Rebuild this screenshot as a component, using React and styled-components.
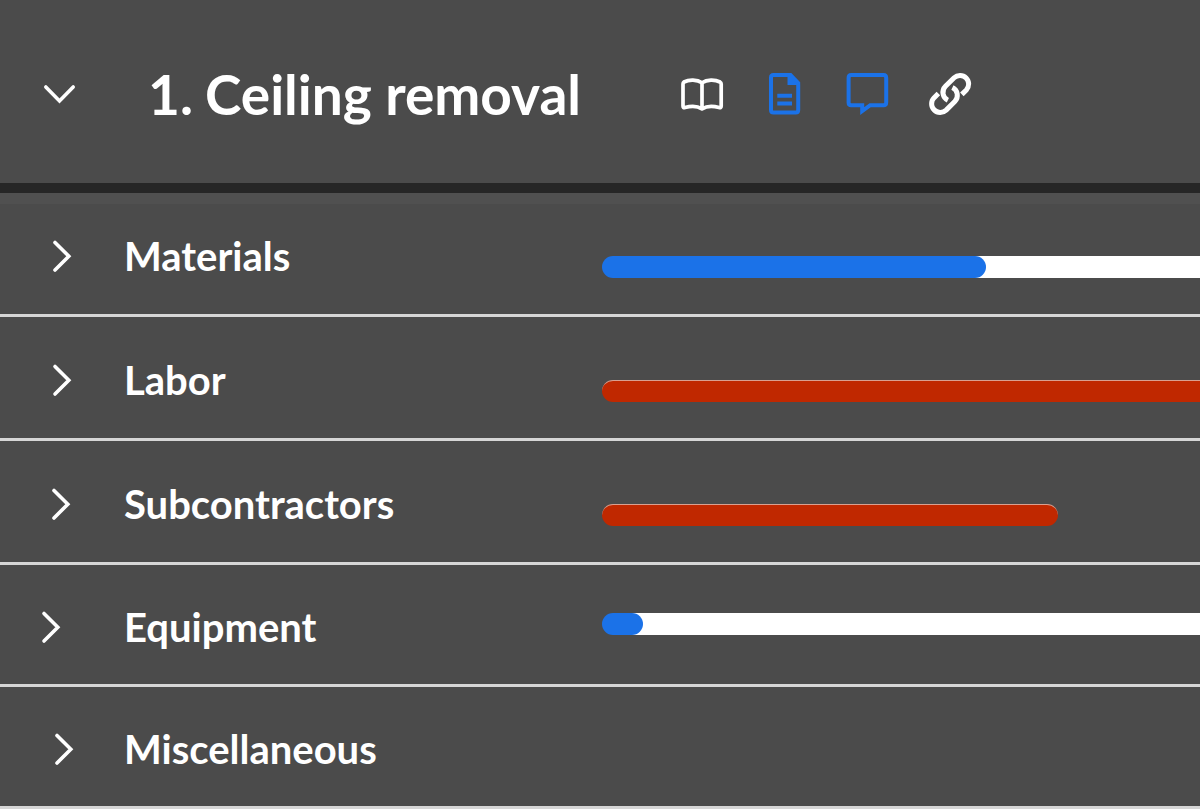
import React, { Component } from "react";
import styled, { createGlobalStyle } from "styled-components";

const GlobalStyle = createGlobalStyle`
  * {
    box-sizing: border-box;
  }

  body {
    margin: 0;
    background: #4b4b4b;
    color: #fff;
    font-family: Lato, "Open Sans", sans-serif;
    overflow-x: hidden;
  }
`;

const Header = styled.header`
  display: flex;
  align-items: center;
  padding: 62px 0 57px;
  border-bottom: 10px solid #262626;
`;

const IconButton = styled.button`
  display: flex;
  flex: none;
  padding: 0;
  border: 0;
  background: none;
  color: ${props => (props.$active ? "#1b72e8" : "#fff")};
  cursor: pointer;
`;

const HeaderToggle = styled.div`
  flex: none;
  width: 148px;
  padding-left: 42px;
`;

const Title = styled.h1`
  display: flex;
  flex: none;
  gap: 12px;
  width: 532px;
  margin: 0;
  font-size: 55px;
  font-weight: 700;
  line-height: 64px;
  white-space: nowrap;
`;

const Actions = styled.div`
  display: flex;
  gap: 39px;
`;

const CostList = styled.ul`
  margin: 0;
  padding: 0;
  list-style: none;
  background: linear-gradient(#505050 11px, #4b4b4b 11px);
`;

const CostRow = styled.li`
  display: grid;
  grid-template-columns: 124px 478px 1fr;
  align-items: center;
  height: ${props => (props.$dense ? 122 : 124)}px;
  padding-top: 4px;
  border-bottom: 3px solid #d6d6d6;
`;

const RowToggle = styled.div`
  padding-left: ${props => props.$indent}px;
`;

const Label = styled.h2`
  margin: 0;
  font-size: 40px;
  font-weight: 700;
  line-height: 48px;
`;

const Track = styled.div`
  height: 22px;
  margin-top: ${props => (props.$raised ? 0 : 22)}px;
  margin-bottom: ${props => (props.$raised ? 5 : 0)}px;
  border-radius: 11px 0 0 11px;
  background: ${props => (props.$over ? "none" : "linear-gradient(90deg, transparent 11px, #fff 11px)")};
`;

const Fill = styled.div`
  height: 100%;
  border-radius: ${props => (props.$full ? "11px 0 0 11px" : "11px")};
  border-top: ${props => (props.$over ? "1px solid #d9a090" : "0")};
  background: ${props => (props.$over ? "#c02800" : "#1b72e8")};
`;

const ChevronDown = () => (
  <svg width="36" height="36" viewBox="0 0 36 36" fill="none" stroke="currentColor" strokeWidth="3.6" strokeLinecap="round">
    <path d="M3.8 11 17.5 25 31.2 11" />
  </svg>
);

const ChevronRight = () => (
  <svg width="22" height="36" viewBox="0 0 22 36" fill="none" stroke="currentColor" strokeWidth="3.6" strokeLinecap="round">
    <path d="M4 4.4 17.8 18.2 4 32" />
  </svg>
);

const BookIcon = () => (
  <svg width="44" height="44" viewBox="0 0 44 44" fill="none" stroke="currentColor" strokeWidth="3.7" strokeLinejoin="round">
    <path d="M4 10C9 7.4 17 7.4 22 10.8 27 7.4 35 7.4 40 10Q41.2 10.8 41.2 12V34Q41.2 36.3 39 35.6C33 33.8 27 33.8 22 36.8 17 33.8 11 33.8 5 35.6Q3 36.3 3 34V12Q3 10.8 4 10ZM22 11V36" />
  </svg>
);

const DocumentIcon = () => (
  <svg width="44" height="44" viewBox="0 0 44 44" fill="none" stroke="currentColor" strokeWidth="4">
    <path d="M10.5 3H27.5L35.2 11V38Q35.2 40.5 32.7 40.5H10.5Q8 40.5 8 38V5.5Q8 3 10.5 3Z" />
    <path d="M24.5 2V13H36V10L28 2Z" fill="currentColor" stroke="none" />
    <path d="M14.3 23.8H29M14.3 31.5H29" />
  </svg>
);

const CommentIcon = () => (
  <svg width="44" height="44" viewBox="0 0 44 44" fill="none" stroke="currentColor" strokeWidth="4">
    <path d="M5.2 3H37.5Q40.2 3 40.2 5.7V30.5Q40.2 33.2 37.5 33.2H24.2L16.2 39V33.2H5.2Q2.6 33.2 2.6 30.5V5.7Q2.6 3 5.2 3Z" />
  </svg>
);

const LinkIcon = () => (
  <svg width="44" height="44" viewBox="1 0.6 22.9 22.9" fill="none" stroke="currentColor" strokeWidth="2.6">
    <path d="M13.19 8.69a4.5 4.5 0 0 1 1.24 7.24l-4.5 4.5a4.5 4.5 0 0 1-6.36-6.36l2.3-2.3M18.1 12.25l2.33-2.32a4.5 4.5 0 0 0-6.36-6.36l-4.5 4.5a4.5 4.5 0 0 0 1.24 7.24" />
  </svg>
);

const costs = [
  { name: "Materials", percent: 64.2, indent: 51 },
  { name: "Labor", percent: 100, indent: 51, over: true, full: true },
  { name: "Subcontractors", percent: 76.2, indent: 50, over: true },
  { name: "Equipment", percent: 6.9, indent: 40, dense: true, raised: true },
  { name: "Miscellaneous", indent: 53, dense: true }
];

class App extends Component {
  renderBar(cost) {
    if (cost.percent === undefined) {
      return null;
    }

    return (
      <Track
        role="progressbar"
        aria-label={cost.name}
        aria-valuenow={cost.percent}
        $over={cost.over}
        $raised={cost.raised}
      >
        <Fill
          $over={cost.over}
          $full={cost.full}
          style={{ width: `${cost.percent}%` }}
        />
      </Track>
    );
  }

  render() {
    return (
      <React.Fragment>
        <GlobalStyle />
        <Header>
          <HeaderToggle>
            <IconButton aria-label="Collapse">
              <ChevronDown />
            </IconButton>
          </HeaderToggle>
          <Title>
            <span>1.</span>
            <span>Ceiling removal</span>
          </Title>
          <Actions>
            <IconButton aria-label="Catalog">
              <BookIcon />
            </IconButton>
            <IconButton aria-label="Notes" $active>
              <DocumentIcon />
            </IconButton>
            <IconButton aria-label="Comments" $active>
              <CommentIcon />
            </IconButton>
            <IconButton aria-label="Link">
              <LinkIcon />
            </IconButton>
          </Actions>
        </Header>
        <CostList>
          {costs.map(cost => (
            <CostRow key={cost.name} $dense={cost.dense}>
              <RowToggle $indent={cost.indent}>
                <IconButton aria-label={`Expand ${cost.name}`}>
                  <ChevronRight />
                </IconButton>
              </RowToggle>
              <Label>{cost.name}</Label>
              {this.renderBar(cost)}
            </CostRow>
          ))}
        </CostList>
      </React.Fragment>
    );
  }
}

export default App;
